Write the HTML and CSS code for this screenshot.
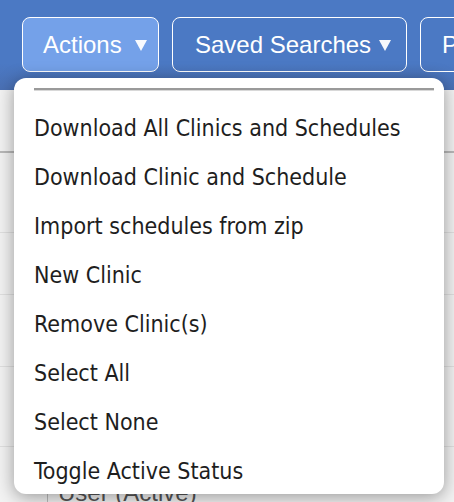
FILE: index.html
```html
<!DOCTYPE html>
<html>
<head>
<meta charset="utf-8">
<link rel="stylesheet" href="styles.css">
</head>
<body>
<div class="page">
  <header class="toolbar">
    <button class="btn btn-active">Actions<span class="caret"></span></button>
    <button class="btn btn-saved">Saved Searches<span class="caret caret-tight"></span></button>
    <button class="btn btn-cut">P</button>
  </header>
  <div class="content">
    <div class="row r1"></div>
    <div class="row r2"></div>
    <div class="row r3"></div>
    <div class="row r4"></div>
    <div class="row r5"><span class="cell">User (Active)</span></div>
  </div>
  <div class="menu">
    <div class="sep"></div>
    <ul class="items">
      <li>Download All Clinics and Schedules</li>
      <li>Download Clinic and Schedule</li>
      <li>Import schedules from zip</li>
      <li>New Clinic</li>
      <li>Remove Clinic(s)</li>
      <li>Select All</li>
      <li>Select None</li>
      <li>Toggle Active Status</li>
    </ul>
  </div>
</div>
</body>
</html>
```
FILE: styles.css
```css
html, body { margin: 0; padding: 0; }
body { width: 454px; height: 502px; overflow: hidden; background: #f0f0f0; font-family: "Liberation Sans", Arial, sans-serif; }
.page { position: relative; width: 454px; height: 502px; overflow: hidden; }
.toolbar {
  height: 90px;
  background: linear-gradient(#4b79c4 0%, #4b79c4 70%, #4a70b4 100%);
  display: flex;
  align-items: flex-start;
  gap: 13px;
  padding: 17px 0 0 22px;
  box-sizing: border-box;
}
.btn {
  flex: none;
  height: 55px;
  box-sizing: border-box;
  border: 1.5px solid #ffffff;
  border-radius: 8px;
  background: transparent;
  color: #ffffff;
  font-family: "Liberation Sans", Arial, sans-serif;
  font-size: 24px;
  padding: 0 0 0 20px;
  text-align: left;
  white-space: nowrap;
  display: flex;
  align-items: center;
}
.btn-active { width: 137px; background: #74a1e9; }
.btn-saved { width: 235px; padding-left: 22px; }
.btn-cut { width: 60px; padding-left: 21px; }
.caret {
  display: inline-block;
  width: 0; height: 0;
  margin-left: 13px;
  margin-top: 2px;
  border-left: 6px solid transparent;
  border-right: 6px solid transparent;
  border-top: 11px solid rgba(255,255,255,0.95);
}
.caret-tight { margin-left: 8px; }
.content { position: absolute; left: 0; right: 0; top: 90px; bottom: 0; background: #f3f3f3; }
.row { border-top: 1px solid #e0e0e0; box-sizing: border-box; }
.r1 { margin-top: 61px; height: 81px; border-top: 2px solid #b9b9b9; }
.r2 { height: 62px; }
.r3 { height: 72px; }
.r4 { height: 80px; }
.r5 { height: 60px; position: relative; }
.cell { position: absolute; left: 47px; top: 33px; padding-left: 10px; border-left: 1px solid #bcbcbc; font-size: 24px; line-height: 26px; color: #555; }
.menu {
  position: absolute;
  left: 14px;
  top: 78px;
  width: 430px;
  height: 416px;
  background: #ffffff;
  border-radius: 12px;
  box-shadow: 0 3px 18px rgba(0,0,0,0.38);
}
.sep { margin: 10px 10px 0 20px; height: 2px; background: #9a9a9a; border-bottom: 1px solid #d8d8d8; }
.items { list-style: none; margin: 0; padding: 13px 0 0 20px; }
.items li {
  height: 49px;
  line-height: 49px;
  font-family: "DejaVu Sans Condensed", "DejaVu Sans", Verdana, sans-serif;
  font-stretch: condensed;
  font-size: 23px;
  color: #1e1e1e;
  white-space: nowrap;
}
```
